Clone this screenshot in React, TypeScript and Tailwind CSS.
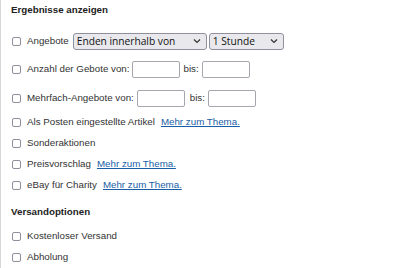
const label = "font-['Liberation_Sans',Arial,sans-serif] text-[9.75px] text-[#333]";

function Box() {
  return (
    <input
      type="checkbox"
      className="appearance-none w-[9px] h-[9px] border border-[#8f8f9d] rounded-[2px] bg-white shrink-0 mr-[6px]"
    />
  );
}

function Chevron() {
  return (
    <svg width="8" height="5" viewBox="0 0 8 5" className="absolute right-[6px] top-1/2 -translate-y-1/2 pointer-events-none">
      <path d="M1 1l3 3 3-3" fill="none" stroke="#333" strokeWidth="1.2" />
    </svg>
  );
}

function Select({ value, w }: { value: string; w: string }) {
  return (
    <div className={`relative h-[17px] ${w}`}>
      <select className="appearance-none w-full h-full bg-[#e9e9ed] border border-[#8f8f9d] rounded-[3px] pl-[3px] font-['Open_Sans',sans-serif] text-[10.2px] text-[#111] leading-none outline-none">
        <option>{value}</option>
      </select>
      <Chevron />
    </div>
  );
}

function NumInput({ ml }: { ml: string }) {
  return <input type="text" className={`w-[48px] h-[17px] bg-white border border-[#a6a6ae] rounded-[2px] outline-none ${ml}`} />;
}

function Link() {
  return <a href="#" className="text-[#1a5ea6] underline ml-[6px]">Mehr zum Thema.</a>;
}

function Row({ h, children }: { h: string; children: React.ReactNode }) {
  return <div className={`flex items-center ${h} ${label}`}>{children}</div>;
}

function Heading({ children }: { children: React.ReactNode }) {
  return (
    <div className="h-[21px] flex items-center -ml-px font-['Liberation_Sans',Arial,sans-serif] text-[9.75px] font-bold text-[#222]">
      {children}
    </div>
  );
}

export default function App() {
  return (
    <div className="w-[400px] h-[268px] bg-white border-l border-[#d6d6d6] pl-[11px] overflow-hidden">
      <Heading>Ergebnisse anzeigen</Heading>
      <div className="mt-[6px]">
        <Row h="h-[28px]">
          <Box />
          <span>Angebote</span>
          <div className="flex gap-[2px] ml-[4px]">
            <Select value="Enden innerhalb von" w="w-[134px]" />
            <Select value="1 Stunde" w="w-[75px]" />
          </div>
        </Row>
        <Row h="h-[29px]">
          <Box />
          <span>Anzahl der Gebote von:</span>
          <NumInput ml="ml-[3px]" />
          <span className="ml-[3px]">bis:</span>
          <NumInput ml="ml-[3px]" />
        </Row>
        <Row h="h-[28px]">
          <Box />
          <span>Mehrfach-Angebote von:</span>
          <NumInput ml="ml-[3px]" />
          <span className="ml-[5px]">bis:</span>
          <NumInput ml="ml-[3px]" />
        </Row>
        <Row h="h-[20px]">
          <Box />
          <span>Als Posten eingestellte Artikel</span>
          <Link />
        </Row>
        <Row h="h-[22px]">
          <Box />
          <span>Sonderaktionen</span>
        </Row>
        <Row h="h-[21px]">
          <Box />
          <span>Preisvorschlag</span>
          <Link />
        </Row>
        <Row h="h-[21px]">
          <Box />
          <span>eBay für Charity</span>
          <Link />
        </Row>
      </div>
      <div className="mt-[6px]">
        <Heading>Versandoptionen</Heading>
      </div>
      <div className="mt-[3px]">
        <Row h="h-[21px]">
          <Box />
          <span>Kostenloser Versand</span>
        </Row>
        <Row h="h-[21px]">
          <Box />
          <span>Abholung</span>
        </Row>
      </div>
    </div>
  );
}
